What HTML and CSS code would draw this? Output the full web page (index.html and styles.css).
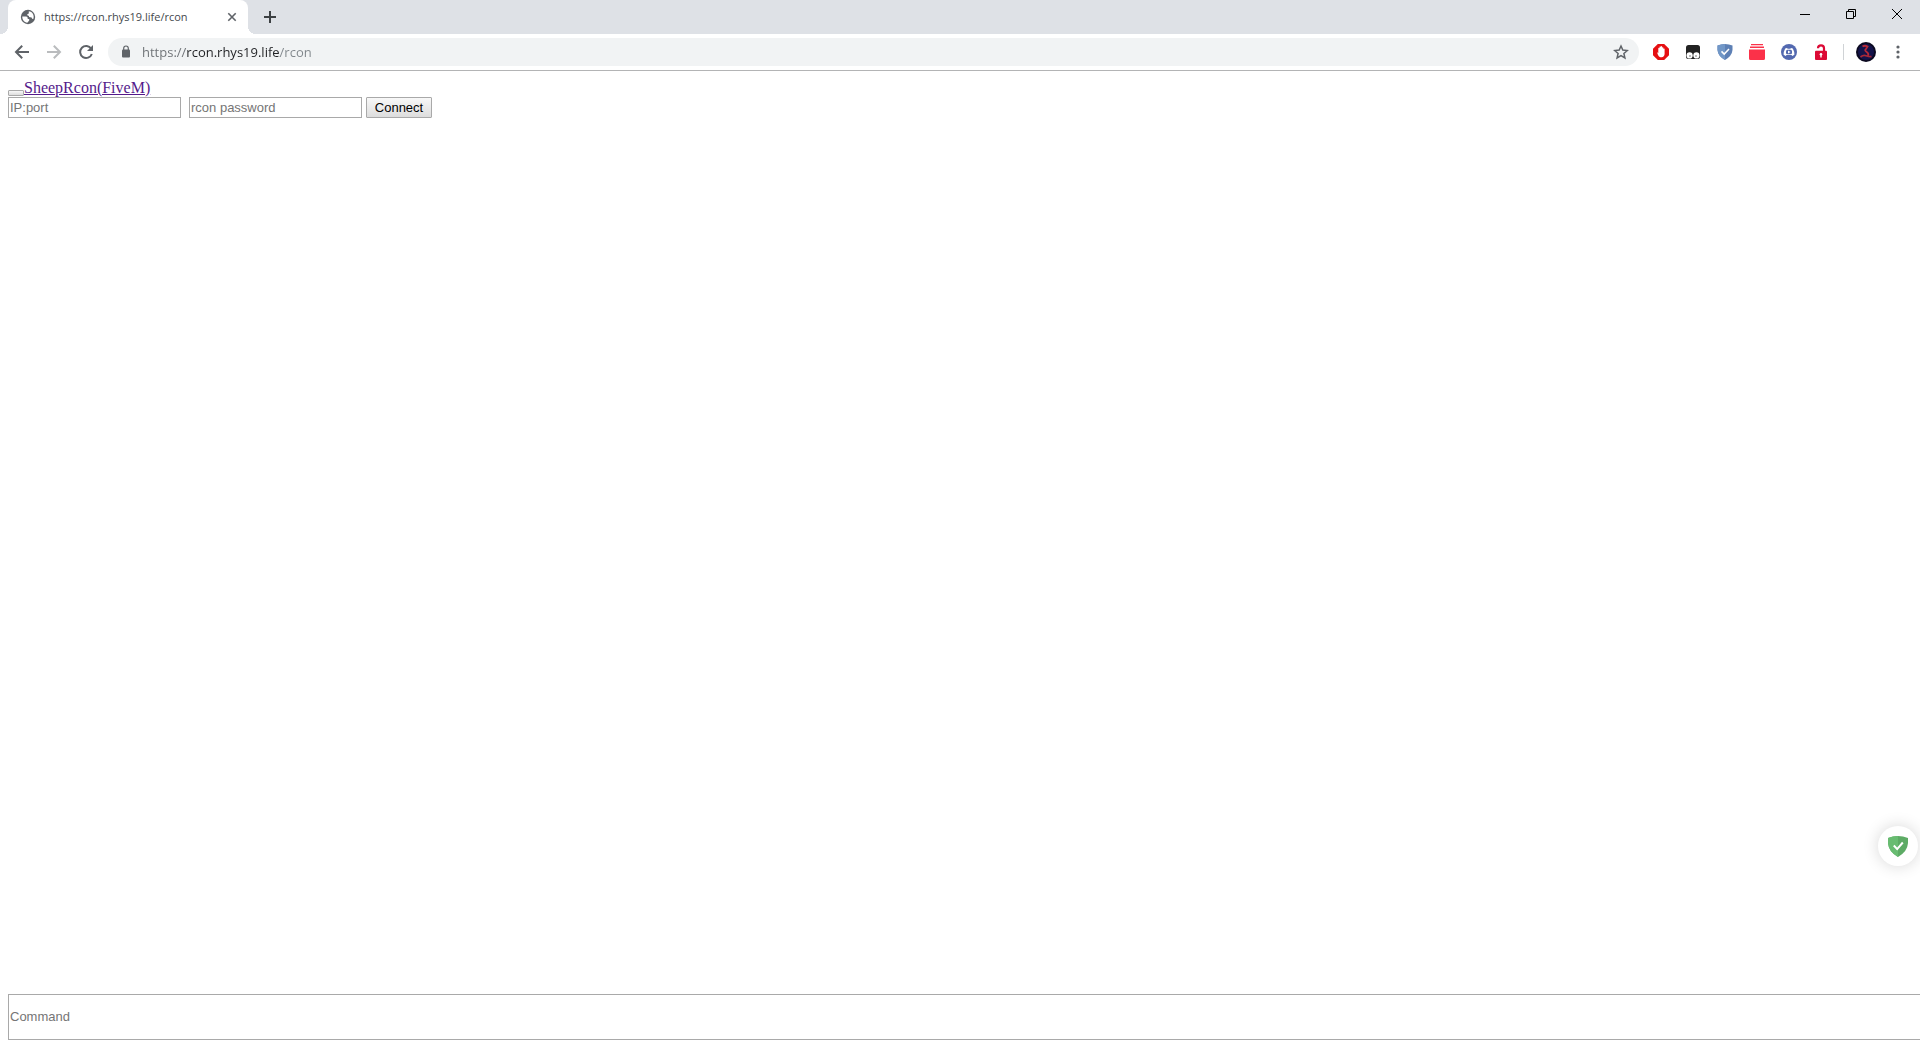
FILE: index.html
```html
<!DOCTYPE html>
<html lang="en">
<head>
<meta charset="utf-8">
<title>https://rcon.rhys19.life/rcon</title>
<link rel="stylesheet" href="styles.css">
</head>
<body>
<header class="browser">
  <div class="tabstrip">
    <div class="tab">
      <svg class="favicon" width="16" height="16" viewBox="0 0 16 16"><circle cx="8" cy="8" r="7.2" fill="#5f6368"/><path d="M2.300 7.600H6.200Q7.600 7.700 7.700 9V9.900H9.200V11.500L7.300 13.700C4.300 13.400 2.100 11 2.300 7.600z" fill="#fff"/><path d="M8.800 2.300C11.600 2.600 13.700 4.900 13.700 8L13.300 10Q11.800 9.900 11.600 8.400L9 8V6.900L7.300 6.300V5.200L8.800 4.600z" fill="#fff"/></svg>
      <span class="tab-title">https://rcon.rhys19.life/rcon</span>
      <button class="tab-close" aria-label="Close tab"><svg width="16" height="16" viewBox="0 0 16 16"><path d="M4.300 4.300l7.400 7.400M11.700 4.300l-7.400 7.400" stroke="#5f6368" stroke-width="1.600"/></svg></button>
    </div>
    <button class="new-tab" aria-label="New tab"><svg width="16" height="16" viewBox="0 0 16 16"><path d="M8 2v12M2 8h12" stroke="#3c4043" stroke-width="2"/></svg></button>
    <div class="window-controls">
      <button aria-label="Minimize"><svg width="12" height="12" viewBox="0 0 12 12"><path d="M1 6.500h10" stroke="#000"/></svg></button>
      <button aria-label="Restore"><svg width="12" height="12" viewBox="0 0 12 12"><path d="M1.500 3.500h7v7h-7zM3.500 3.500v-2h7v7h-2" fill="none" stroke="#000"/></svg></button>
      <button aria-label="Close"><svg width="12" height="12" viewBox="0 0 12 12"><path d="M1 1l10 10M11 1L1 11" stroke="#000"/></svg></button>
    </div>
  </div>
  <div class="toolbar">
    <nav class="nav">
      <button aria-label="Back"><svg width="16" height="16" viewBox="0 0 16 16"><path d="M15 8H2.500M8.200 1.800L2 8l6.200 6.200" fill="none" stroke="#5f6368" stroke-width="2"/></svg></button>
      <button aria-label="Forward"><svg width="16" height="16" viewBox="0 0 16 16"><path d="M1 8h12.500M7.800 1.800L14 8l-6.200 6.200" fill="none" stroke="#babcbe" stroke-width="2"/></svg></button>
      <button aria-label="Reload"><svg width="16" height="16" viewBox="0 0 16 16"><path d="M13.200 4.800A6 6 0 1 0 13.800 10" fill="none" stroke="#5f6368" stroke-width="2"/><path d="M15 1v6H9z" fill="#5f6368"/></svg></button>
    </nav>
    <div class="omnibox">
      <svg width="16" height="16" viewBox="0 0 16 16"><rect x="4" y="5.500" width="8" height="8" rx="1" fill="#5f6368"/><path d="M5.700 6V4.300a2.300 2.300 0 0 1 4.600 0V6" fill="none" stroke="#5f6368" stroke-width="1.200"/></svg>
      <input class="url" type="text" aria-label="Address" value="https://rcon.rhys19.life/rcon">
      <button aria-label="Bookmark"><svg width="16" height="16" viewBox="0 0 16 16"><path d="M8 2l1.800 4.100 4.500.4-3.400 3 1 4.400L8 11.600l-3.900 2.300 1-4.400-3.400-3 4.500-.4z" fill="none" stroke="#5f6368" stroke-width="1.500"/></svg></button>
    </div>
    <div class="extensions">
      <button aria-label="AdBlock"><svg width="16" height="16" viewBox="0 0 16 16"><path d="M4.800 0h6.400L16 4.800v6.400L11.200 16H4.800L0 11.200V4.800z" fill="#e60f12"/><path d="M4 8.200l1.300.7V4.200q.6-.8 1.200 0V2.800q.7-.8 1.300 0v-.4q.7-.8 1.300 0v1.200q.6-.7 1.200 0v1.200q.7-.7 1.300 0V10q-.2 3-3 3.200H7.400Q5.800 13 5 11z" fill="#fff"/></svg></button>
      <button aria-label="Tampermonkey"><svg width="16" height="16" viewBox="0 0 16 16"><rect x="1" y="1" width="14" height="14" rx="2.500" fill="#222"/><circle cx="4.600" cy="11.400" r="3.100" fill="#fff"/><circle cx="11.400" cy="11.400" r="3.100" fill="#fff"/><circle cx="5" cy="12" r=".7" fill="#444"/><circle cx="11" cy="12" r=".7" fill="#444"/></svg></button>
      <button aria-label="AdGuard"><svg width="16" height="16" viewBox="0 0 16 16"><path d="M8 0Q12 .2 15.500 1.600V6Q15 12 8 16 1 12 .5 6V1.600Q4 .2 8 0z" fill="#5d80b5"/><path d="M8 0v16Q1 12 .5 6V1.600Q4 .2 8 0z" fill="#7197c7"/><path d="M4.500 7.400l2.700 2.700L12 5" fill="none" stroke="#fff" stroke-width="1.500"/></svg></button>
      <button aria-label="Tab stack"><svg width="16" height="16" viewBox="0 0 16 16"><path d="M2 0h12v1.200H2zM1 2.600h14v1.300H1zM0 5.400h16V14.500q0 1.500-1.500 1.500h-13Q0 16 0 14.500z" fill="#fb3149"/></svg></button>
      <button aria-label="Discord"><svg width="16" height="16" viewBox="0 0 16 16"><circle cx="8" cy="8" r="8" fill="#5369b0"/><path d="M4.200 4.500L6 4l.7.800h2.600L10 4l1.800.5Q13.500 7.500 13.400 10.800L11.300 12l-.8-1h-5l-.8 1-2.100-1.200Q2.500 7.500 4.200 4.500z" fill="#fff"/><rect x="5" y="5.800" width="6" height="4.400" rx="1.500" fill="#5369b0"/><path d="M7 6.400l2.700 1.600L7 9.600z" fill="#fff"/></svg></button>
      <button aria-label="Unlock"><svg width="16" height="16" viewBox="0 0 16 16"><path d="M5 4.200Q5 1.300 8 1.300T11 4.200V8" fill="none" stroke="#dc0a35" stroke-width="2.200"/><rect x="2" y="6.800" width="12" height="9.200" rx="1" fill="#dc0a35"/><circle cx="8" cy="10.200" r="1.300" fill="#fff"/><path d="M7.300 10.500h1.400v3H7.300z" fill="#fff"/></svg></button>
    </div>
    <span class="divider"></span>
    <button class="avatar" aria-label="Profile"><svg width="20" height="20" viewBox="0 0 20 20"><circle cx="10" cy="10" r="10" fill="#0b0920"/><circle cx="10" cy="10" r="8" fill="#14134a"/><path d="M6.500 4.500Q9 3 11.500 4.500L10 7Q8 8.500 11 10.200 13.500 12 11.500 13.800" fill="none" stroke="#b82a38" stroke-width="1.800"/><path d="M4.500 15q3-2.300 5.500-1.300t5.500 1" fill="none" stroke="#a82737" stroke-width="1.700"/></svg></button>
    <button class="menu" aria-label="Menu"><svg width="16" height="16" viewBox="0 0 16 16"><circle cx="8" cy="3" r="1.600" fill="#5f6368"/><circle cx="8" cy="8" r="1.600" fill="#5f6368"/><circle cx="8" cy="13" r="1.600" fill="#5f6368"/></svg></button>
  </div>
</header>
<main class="page">
  <div class="brand"><button class="toggle" aria-label="Toggle navigation"></button><a href="#">SheepRcon(FiveM)</a></div>
  <form class="connect">
    <input class="field" type="text" placeholder="IP:port" aria-label="IP:port">
    <input class="field" type="password" placeholder="rcon password" aria-label="rcon password">
    <button class="submit" type="button">Connect</button>
  </form>
  <input class="command" type="text" placeholder="Command" aria-label="Command">
</main>
<button class="shield" aria-label="AdGuard assistant"><svg width="22" height="22" viewBox="0 0 22 22"><path d="M11 1Q16 1.200 21 3v5q-.5 8.500-10 14Q1.500 16.500 1 8V3q5-1.800 10-2z" fill="#5dab65"/><path d="M11 1v21Q1.500 16.500 1 8V3q5-1.800 10-2z" fill="#68bc71"/><path d="M6.800 10.500l3.400 3.600 5.600-6.600" fill="none" stroke="#fff" stroke-width="2"/></svg></button>
</body>
</html>
```
FILE: styles.css
```css
* {
  box-sizing: border-box;
}

body {
  display: flex;
  flex-direction: column;
  height: 100vh;
  margin: 0;
  overflow: hidden;
  background: #fff;
}

button {
  margin: 0;
  padding: 0;
  border: 0;
  background: none;
}

svg {
  display: block;
}

/* Browser frame */
.browser {
  border-bottom: 1px solid #b3b4b5;
  font-family: "Open Sans", sans-serif;
}

.tabstrip {
  display: flex;
  align-items: center;
  height: 34px;
  padding-left: 8px;
  background: #dee1e6;
}

.tab {
  position: relative;
  display: flex;
  align-items: center;
  width: 240px;
  height: 34px;
  padding: 0 8px 0 12px;
  border-radius: 8px 8px 0 0;
  background: #fff;
}

.tab::before,
.tab::after {
  content: "";
  position: absolute;
  bottom: 0;
  width: 8px;
  height: 8px;
}

.tab::before {
  left: -8px;
  background: radial-gradient(circle at 0 0, #dee1e6 8px, #fff 8px);
}

.tab::after {
  right: -8px;
  background: radial-gradient(circle at 100% 0, #dee1e6 8px, #fff 8px);
}

.tab-title {
  flex: 1;
  margin-left: 8px;
  color: #45494d;
  font-size: 11px;
  line-height: 14px;
}

.new-tab {
  margin-left: 14px;
}

.window-controls {
  display: flex;
  align-self: flex-start;
  margin-left: auto;
}

.window-controls button {
  display: grid;
  place-items: center;
  width: 46px;
  height: 28px;
}

.toolbar {
  display: flex;
  align-items: center;
  height: 36px;
  padding: 0 14px;
}

.nav {
  display: flex;
  gap: 16px;
}

.omnibox {
  display: flex;
  flex: 1;
  align-items: center;
  height: 28px;
  margin-left: 14px;
  padding: 0 10px;
  border-radius: 14px;
  background: #f1f3f4;
}

.url {
  flex: 1;
  min-width: 0;
  height: 28px;
  margin-left: 8px;
  padding: 0;
  border: 0;
  outline: 0;
  background: linear-gradient(90deg, #6b6f73 45px, #202124 45px 138px, #80868b 138px);
  background-clip: text;
  -webkit-background-clip: text;
  color: transparent;
  font-family: inherit;
  font-size: 13px;
}

.extensions {
  display: flex;
  gap: 16px;
  margin-left: 14px;
}

.divider {
  width: 1px;
  height: 16px;
  margin: 0 12px 0 14px;
  background: #d0d3d6;
}

.menu {
  margin-left: 14px;
}

/* Page */
.page {
  display: flex;
  flex: 1;
  flex-direction: column;
  min-height: 0;
  padding: 8px 0 0 8px;
}

.brand {
  display: flex;
  align-items: flex-end;
  height: 18px;
  font-family: "Liberation Serif", serif;
  font-size: 16px;
  line-height: 18px;
}

.brand a {
  color: #551a8b;
}

.toggle {
  width: 16px;
  height: 6px;
  margin-bottom: 1px;
}

.toggle,
.submit {
  border: 1px solid #a9a9a9;
  border-radius: 1px;
  background: linear-gradient(#f8f8f8, #ddd);
}

.connect {
  display: flex;
}

.field,
.command,
.submit {
  font-family: "Liberation Sans", sans-serif;
  font-size: 13px;
}

.field,
.command {
  padding: 1px;
  border: 1px solid #a9a9a9;
  border-radius: 0;
  outline: 0;
  background: #fff;
}

.field {
  width: 173px;
  height: 21px;
  margin-right: 8px;
}

.field::placeholder,
.command::placeholder {
  color: #757575;
}

.submit {
  width: 66px;
  height: 21px;
  margin-left: -4px;
  color: #000;
}

.command {
  width: 100%;
  height: 46px;
  margin-top: auto;
  padding-bottom: 3px;
  border-right: 0;
}

/* Floating assistant */
.shield {
  position: fixed;
  right: 2px;
  bottom: 174px;
  display: grid;
  place-items: center;
  width: 40px;
  height: 40px;
  border-radius: 50%;
  background: #fff;
  box-shadow: 0 0 16px rgba(0, 0, 0, 0.16);
}
```
